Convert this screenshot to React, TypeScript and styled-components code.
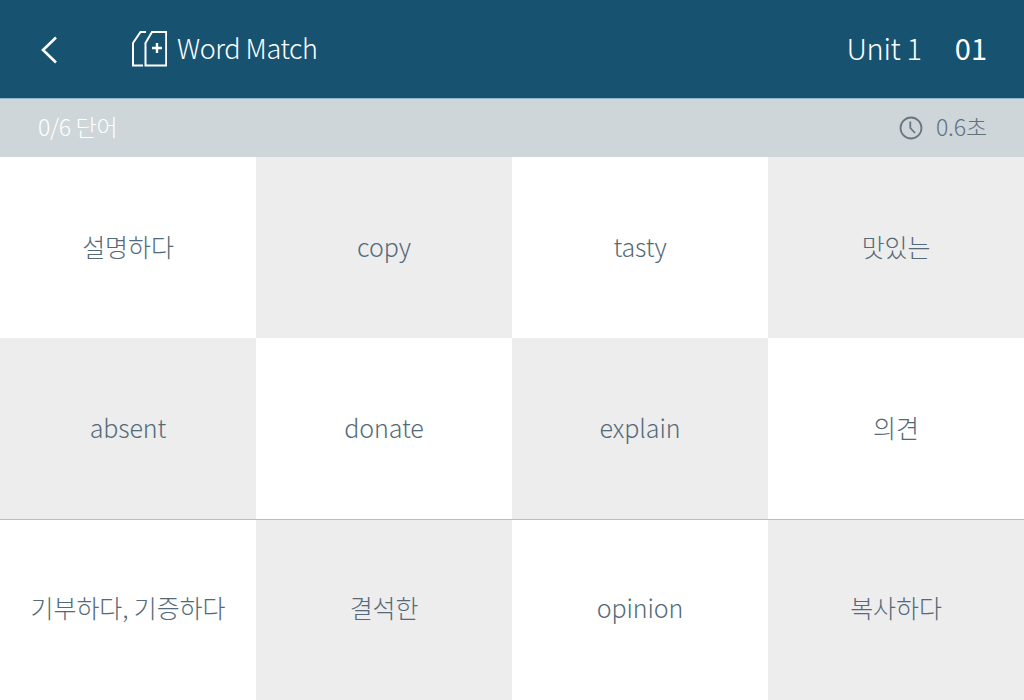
import styled, { createGlobalStyle } from 'styled-components';

const words = [
  ['설명하다', 'copy', 'tasty', '맛있는'],
  ['absent', 'donate', 'explain', '의견'],
  ['기부하다, 기증하다', '결석한', 'opinion', '복사하다'],
];

export default function App() {
  return (
    <Page>
      <GlobalStyle />
      <Header>
        <BackButton>
          <svg width="18" height="28" viewBox="0 0 18 28" fill="none">
            <path d="M16 1.5 L3 14 L16 26.5" stroke="#fff" strokeWidth="2.6" />
          </svg>
        </BackButton>
        <TitleIcon>
          <svg width="36" height="36" viewBox="0 0 36 36" fill="none" stroke="#fff" strokeWidth="2">
            <path d="M12 34.5 H2 V12 L9.5 1 H15" />
            <path d="M14.5 34.5 V12 L21 1 H35.2 V34.5 Z" />
            <path d="M26 12 V22 M21 17 H31" strokeWidth="2.4" />
          </svg>
        </TitleIcon>
        <Title>Word Match</Title>
        <Unit>Unit 1</Unit>
        <UnitNumber>01</UnitNumber>
      </Header>
      <StatusBar>
        <Progress>0/6 단어</Progress>
        <Timer>
          <svg width="24" height="24" viewBox="0 0 24 24" fill="none" stroke="#66777f" strokeWidth="1.8">
            <circle cx="12" cy="12" r="10.5" />
            <path d="M11.3 5.5 V12 L16 17" />
          </svg>
          <TimerText>0.6초</TimerText>
        </Timer>
      </StatusBar>
      <Board>
        {words.map((row, r) => (
          <Row key={r} $divided={r === 1}>
            {row.map((word, c) => (
              <Cell key={word} $shaded={(r + c) % 2 === 1} $lift={r === 2 ? 6 : 3}>{word}</Cell>
            ))}
          </Row>
        ))}
      </Board>
    </Page>
  );
}

const GlobalStyle = createGlobalStyle`
  html, body {
    margin: 0;
    padding: 0;
    background: #fff;
  }
  body {
    font-family: "Noto Sans CJK KR", "Noto Sans", sans-serif;
    font-weight: 300;
  }
`;

const Page = styled.div`
  width: 1024px;
  height: 700px;
  overflow: hidden;
`;

const Header = styled.header`
  display: flex;
  align-items: center;
  height: 98px;
  padding: 0 37px 0 40px;
  background: #175371;
  border-bottom: 1px solid #8fb4c8;
  color: #fff;
`;

const BackButton = styled.div`
  display: flex;
  width: 18px;
  height: 28px;
  margin: 2px 73px 0 0;
`;

const TitleIcon = styled.div`
  display: flex;
  width: 36px;
  height: 36px;
  margin-right: 10px;
`;

const Title = styled.div`
  flex: 1;
  padding-bottom: 2px;
  font-size: 27px;
  line-height: 36px;
  font-weight: 300;
  letter-spacing: -0.45px;
`;

const Unit = styled.div`
  padding-bottom: 4px;
  font-size: 29px;
  line-height: 36px;
  font-weight: 300;
  letter-spacing: -0.3px;
`;

const UnitNumber = styled.div`
  margin-left: 33px;
  padding-bottom: 4px;
  font-size: 29px;
  line-height: 36px;
  font-weight: 400;
`;

const StatusBar = styled.div`
  display: flex;
  align-items: center;
  justify-content: space-between;
  box-sizing: border-box;
  height: 58px;
  padding: 0 37px 0 38px;
  background: #cfd6d9;
`;

const Progress = styled.div`
  padding-bottom: 4px;
  font-size: 23px;
  font-weight: 300;
  color: #fff;
  letter-spacing: -0.3px;
`;

const Timer = styled.div`
  display: flex;
  align-items: center;
  gap: 13px;
`;

const TimerText = styled.div`
  padding-bottom: 4px;
  font-size: 23px;
  font-weight: 300;
  color: #5e717d;
  letter-spacing: -0.1px;
`;

const Board = styled.main`
  display: grid;
  grid-template-rows: 181px 182px 180px;
`;

const Row = styled.div<{ $divided: boolean }>`
  display: grid;
  grid-template-columns: repeat(4, 256px);
  box-sizing: border-box;
  border-bottom: ${p => (p.$divided ? '1px solid #bdbdbd' : 'none')};
`;

const Cell = styled.div<{ $shaded: boolean; $lift: number }>`
  display: flex;
  align-items: center;
  justify-content: center;
  padding-bottom: ${p => p.$lift}px;
  background: ${p => (p.$shaded ? '#ededed' : '#fff')};
  font-size: 25px;
  font-weight: 300;
  color: #546a78;
  letter-spacing: -0.1px;
`;
